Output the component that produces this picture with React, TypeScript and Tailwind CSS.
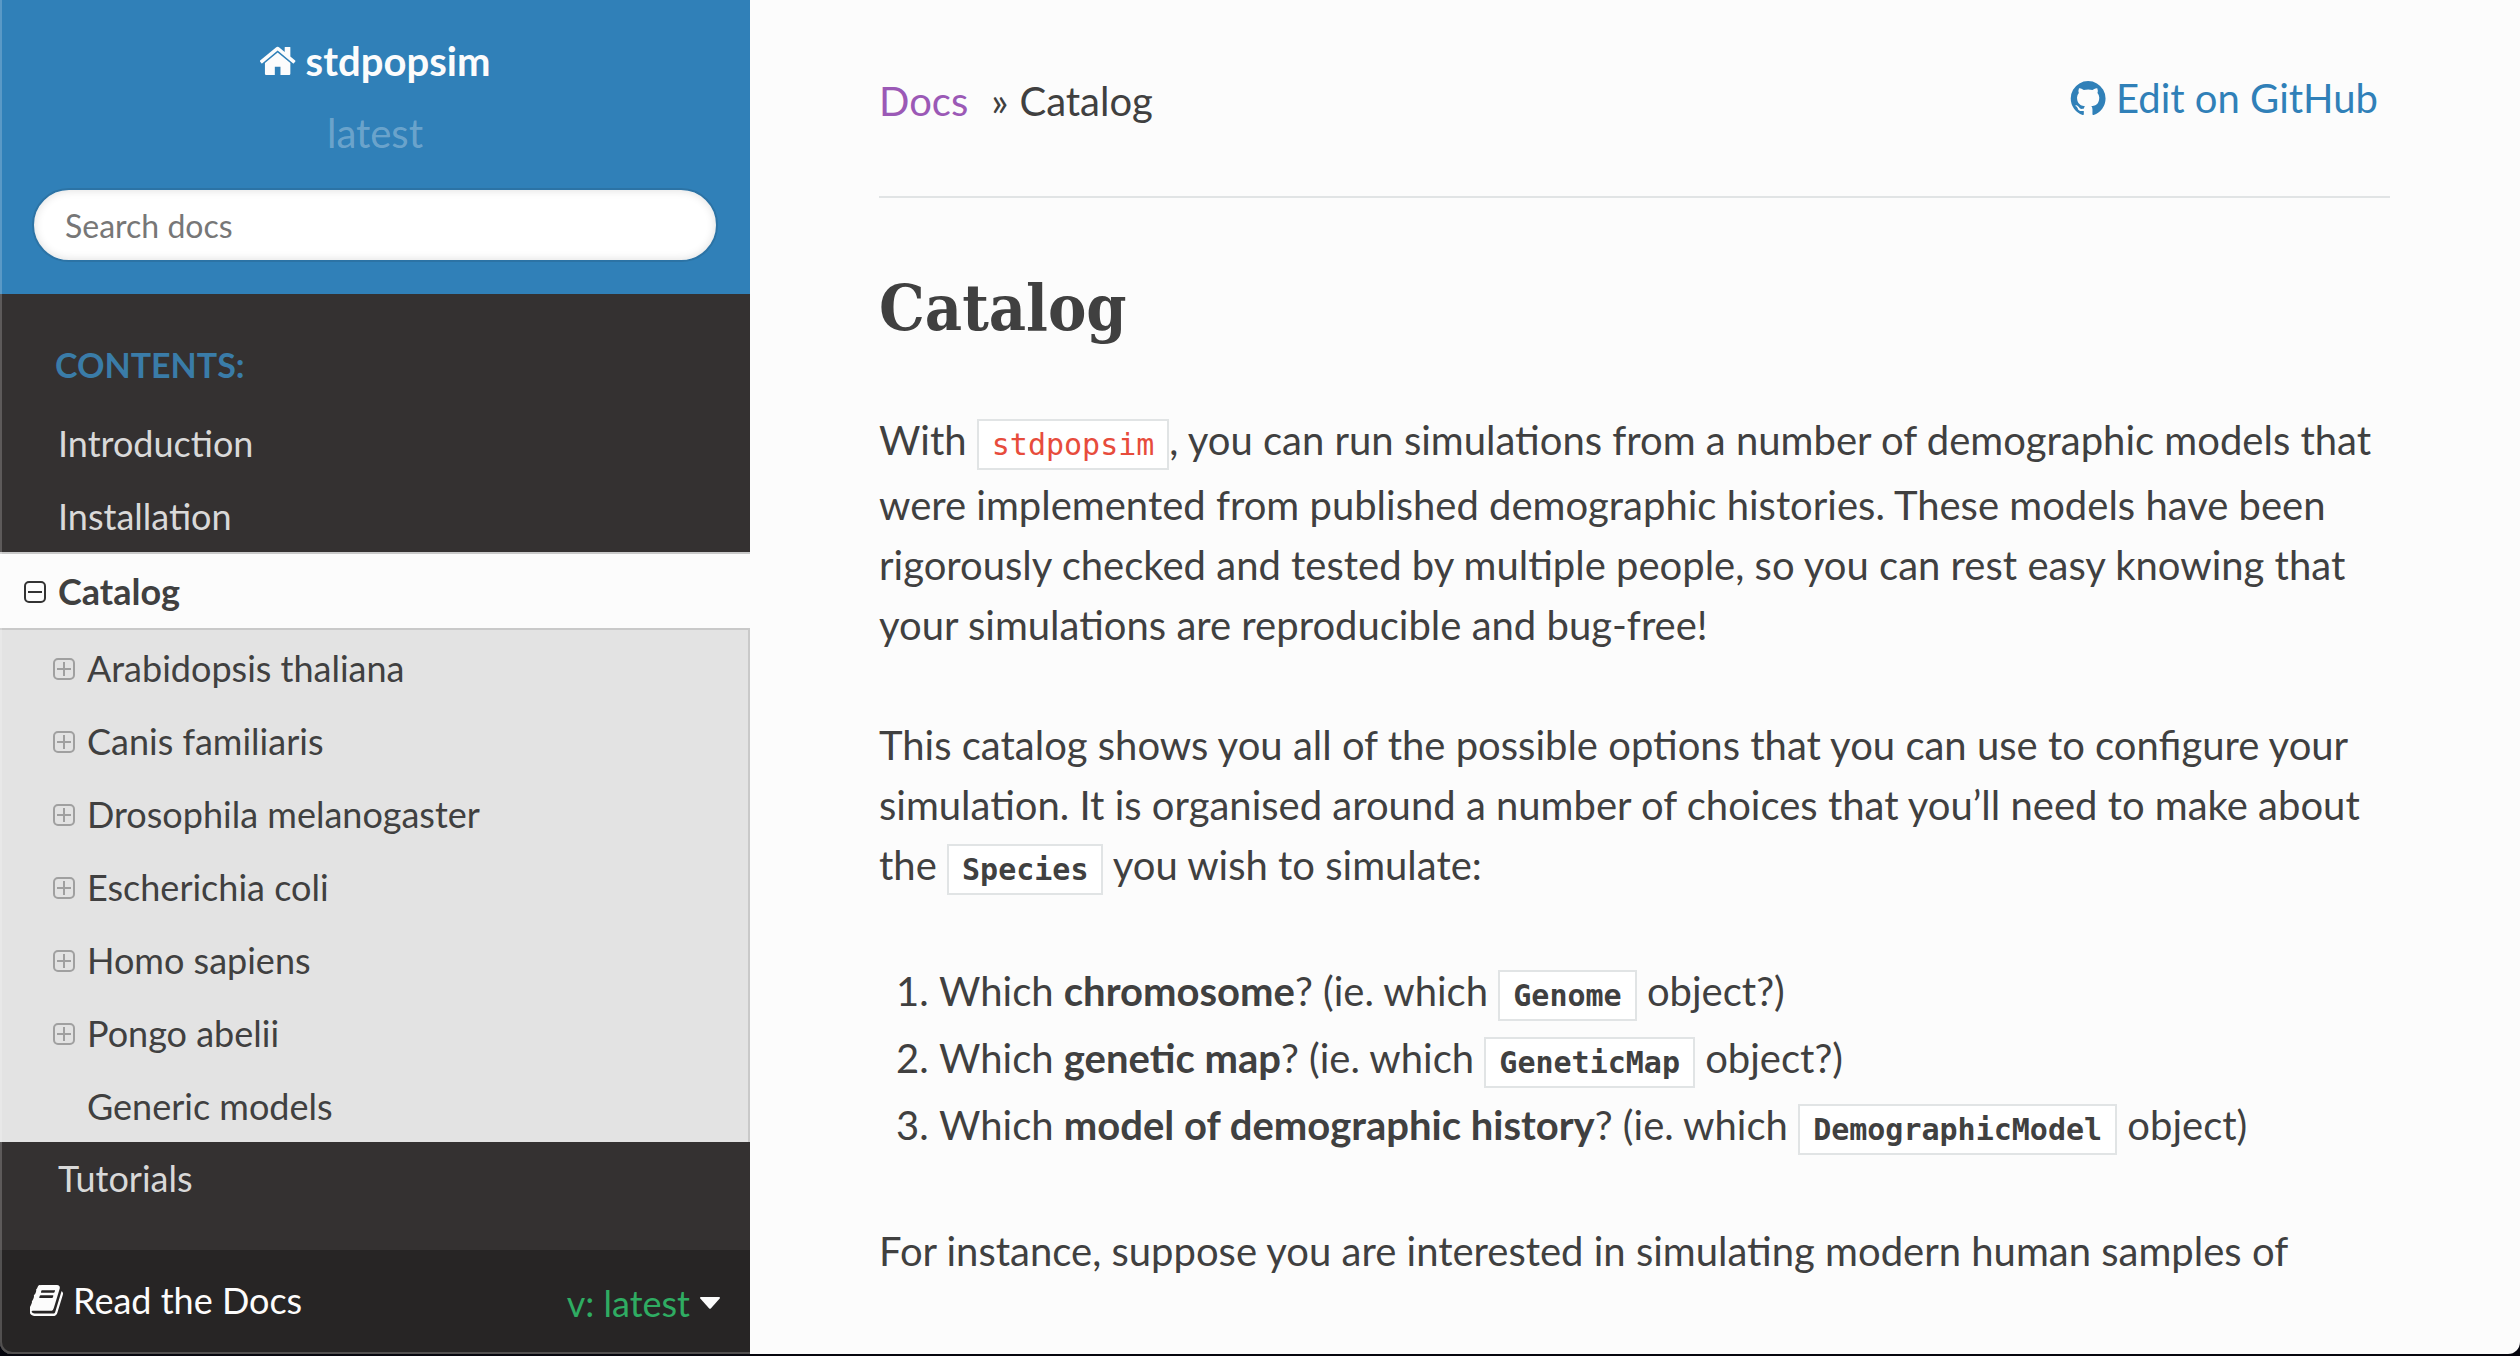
import type { ReactNode } from "react";

const species = [
  "Arabidopsis thaliana",
  "Canis familiaris",
  "Drosophila melanogaster",
  "Escherichia coli",
  "Homo sapiens",
  "Pongo abelii",
];

const HOME =
  "M1472 992v480q0 26-19 45t-45 19h-384v-384h-256v384h-384q-26 0-45-19t-19-45v-480q0-1 .5-3t.5-3l575-474 575 474q1 2 1 6zm223-69l-62 74q-8 9-21 11h-3q-13 0-21-7l-692-577-692 577q-12 8-24 7-13-2-21-11l-62-74q-8-10-7-23.5t11-21.5l719-599q32-26 76-26t76 26l244 204v-195q0-14 9-23t23-9h192q14 0 23 9t9 23v408l219 182q10 8 11 21.5t-7 23.5z";
const BOOK =
  "M1703 478q40 57 18 129l-275 906q-19 64-76.5 107.5t-122.5 43.5h-923q-77 0-148.5-53.5t-99.5-131.5q-24-67-2-127 0-4 3-27t4-37q1-8-3-21.5t-3-19.5q2-11 8-21t16.5-23.5 16.5-23.5q23-38 45-91.5t30-91.5q3-10 .5-30t-.5-28q3-11 17-28t17-23q21-36 42-92t25-90q1-9-2.5-32t.5-28q4-13 22-30.5t22-22.5q19-26 42.5-84.5t27.5-96.5q1-8-3-25.5t-2-26.5q2-8 9-18t18-23 17-21q8-12 16.5-30.5t15-35 16-36 19.5-32 26.5-23.5 36-11.5 47.5 5.5l-1 3q38-9 51-9h761q74 0 114 56t18 130l-274 906q-36 119-71.5 153.5t-128.5 34.5h-869q-27 0-38 15-11 16-1 43 24 70 144 70h923q29 0 56-15.5t35-41.5l300-987q7-22 5-57 38 15 59 43zm-1064 2q-4 13 2 22.5t20 9.5h608q13 0 25.5-9.5t16.5-22.5l21-64q4-13-2-22.5t-20-9.5h-608q-13 0-25.5 9.5t-16.5 22.5zm-83 256q-4 13 2 22.5t20 9.5h608q13 0 25.5-9.5t16.5-22.5l21-64q4-13-2-22.5t-20-9.5h-608q-13 0-25.5 9.5t-16.5 22.5z";
const GITHUB =
  "M896 128q209 0 385.5 103t279.5 279.5 103 385.5q0 251-146.5 451.5t-378.5 277.5q-27 5-40-7t-13-30q0-3 .5-76.5t.5-134.5q0-97-52-142 57-6 102.5-18t94-39 81-66.5 53-105 20.5-150.5q0-119-79-206 37-91-8-204-28-9-81 11t-92 44l-38 24q-93-26-192-26t-192 26q-16-11-42.5-27t-83.5-38.5-85-13.5q-45 113-8 204-79 87-79 206 0 85 20.5 150t52.5 105 80.5 67 94 39 102.5 18q-39 36-49 103-21 10-45 15t-57 5-65.5-21.5-55.5-62.5q-19-32-48.5-52t-49.5-24l-20-3q-21 0-29 4.5t-5 11.5 9 14 13 12l7 5q22 10 43.5 38t31.5 51l10 23q13 38 44 61.5t67 30 69.5 7 55.5-3.5l23-4q0 38 .5 88.5t.5 54.5q0 18-13 30t-40 7q-232-77-378.5-277.5t-146.5-451.5q0-209 103-385.5t279.5-279.5 385.5-103z";

function Glyph({ d, className }: { d: string; className: string }) {
  return (
    <svg viewBox="96 96 1632 1600" className={className} fill="currentColor" aria-hidden="true">
      <path d={d} />
    </svg>
  );
}

function ToggleIcon({ open }: { open?: boolean }) {
  return (
    <svg viewBox="0 0 22 22" className="size-[22px]" fill="none" stroke="currentColor" strokeWidth="2" aria-hidden="true">
      <rect x="1" y="1" width="20" height="20" rx="4" />
      <path d={open ? "M4 11h14" : "M4 11h14M11 4v14"} />
    </svg>
  );
}

function Code({ children, tone = "text-[#404040] font-bold" }: { children: ReactNode; tone?: string }) {
  return (
    <code
      className={`border-2 border-[#e1e4e5] bg-white px-[13px] py-[6px] font-['DejaVu_Sans_Mono',monospace] text-[30px] whitespace-nowrap ${tone}`}
    >
      {children}
    </code>
  );
}

function Sidebar() {
  return (
    <nav className="relative flex w-[750px] shrink-0 flex-col bg-[#343131] text-[36px] leading-[45px] text-[#d9d9d9]">
      <div className="flex flex-col items-center bg-[#3080b8] px-8 pt-[31px] pb-8 text-[40px] leading-[60px]">
        <a href="#" className="flex items-center gap-[10px] font-bold text-[#fcfcfc]">
          <Glyph d={HOME} className="size-9" />
          stdpopsim
        </a>
        <div className="mt-3 text-white/30">latest</div>
        <input
          type="search"
          aria-label="Search docs"
          placeholder="Search docs"
          className="mt-[25px] h-[74px] w-full rounded-full border-2 border-[#2c73a5] bg-white px-[31px] text-[32px] text-[#404040] shadow-[inset_0_0_10px_#ddd] placeholder:text-[#777]"
        />
      </div>
      <p className="px-[55px] pt-[31px] text-[34px] leading-[80px] font-bold text-[#3a7ca8] uppercase">Contents:</p>
      <a href="#" className="px-[58px] pt-4 pb-[13px]">Introduction</a>
      <a href="#" className="px-[58px] pt-[15px] pb-[13px]">Installation</a>
      <div className="flex items-center gap-3 border-y-2 border-[#c9c9c9] bg-[#fcfcfc] pt-[15px] pb-[14px] pl-6 font-bold text-[#404040]">
        <button type="button" aria-label="Collapse Catalog" className="text-[#333]">
          <ToggleIcon open />
        </button>
        <a href="#">Catalog</a>
      </div>
      <ul className="border-r-2 border-[#c9c9c9] bg-[#e3e3e3] pt-px text-[#404040]">
        {species.map((name) => (
          <li key={name} className="flex items-center gap-3 pt-[15px] pb-[13px] pl-[53px]">
            <button type="button" aria-label={`Expand ${name}`} className="text-[#a0a0a0]">
              <ToggleIcon />
            </button>
            <a href="#">{name}</a>
          </li>
        ))}
        <li className="pt-[15px] pb-[13px] pl-[87px]">
          <a href="#">Generic models</a>
        </li>
      </ul>
      <a href="#" className="px-[58px] py-[14px]">Tutorials</a>
      <div className="mt-auto flex items-start justify-between bg-[#272525] px-[30px] pt-5 pb-[21px] leading-[60px] text-[#fcfcfc]">
        <span className="flex items-center gap-[10px]">
          <Glyph d={BOOK} className="size-[33px]" />
          Read the Docs
        </span>
        <button type="button" className="flex items-center gap-[10px] pt-[3px] text-[#2fac62]">
          v: latest
          <svg viewBox="0 0 20 12" className="w-5 text-[#fcfcfc]" fill="currentColor" aria-hidden="true">
            <path d="M1 0h18q1.500 0 .7 1.500L11 11.200q-1 1-2 0L.3 1.500Q-.5 0 1 0z" />
          </svg>
        </button>
      </div>
      <div className="pointer-events-none absolute inset-0 rounded-bl-[12px] border-b-2 border-l-2 border-white/20" />
    </nav>
  );
}

export default function App() {
  return (
    <div className="h-screen bg-[#06060e] pb-[2px] font-['Lato',sans-serif]">
      <div className="flex h-full overflow-hidden rounded-b-[12px] bg-[#fcfcfc]">
        <Sidebar />
        <main className="min-w-0 flex-1 pr-[130px] pl-[129px] pt-[68px] text-[40px] leading-[60px] text-[#404040]">
          <header className="flex items-start justify-between border-b-2 border-[#e1e4e5] pb-[65px]">
            <div className="flex gap-[11px] pt-[3px]">
              <a href="#" className="mr-3 text-[#9b59b6]">Docs</a>
              <span>»</span>
              <span>Catalog</span>
            </div>
            <a href="#" className="mr-3 flex items-center gap-[9px] text-[#3080b8]">
              <Glyph d={GITHUB} className="size-[37px]" />
              Edit on GitHub
            </a>
          </header>
          <h1 className="mt-[66px] mb-[58px] font-['DejaVu_Serif_Condensed','DejaVu_Serif',serif] text-[64px] leading-[88px] font-bold">
            Catalog
          </h1>
          <p className="mb-[60px]">
            With <Code tone="text-[#e74c3c]">stdpopsim</Code>, you can run simulations from a number of demographic
            models that were implemented from published demographic histories. These models have been rigorously
            checked and tested by multiple people, so you can rest easy knowing that your simulations are reproducible
            and bug-free!
          </p>
          <p className="mb-[60px]">
            This catalog shows you all of the possible options that you can use to configure your simulation. It is
            organised around a number of choices that you’ll need to make about the <Code>Species</Code> you wish to
            simulate:
          </p>
          <ol className="mb-[60px] list-decimal pl-[60px] leading-[62px]">
            <li>
              Which <strong>chromosome</strong>? (ie. which <Code>Genome</Code> object?)
            </li>
            <li>
              Which <strong>genetic map</strong>? (ie. which <Code>GeneticMap</Code> object?)
            </li>
            <li>
              Which <strong>model of demographic history</strong>? (ie. which <Code>DemographicModel</Code> object)
            </li>
          </ol>
          <p>For instance, suppose you are interested in simulating modern human samples of</p>
        </main>
      </div>
    </div>
  );
}
